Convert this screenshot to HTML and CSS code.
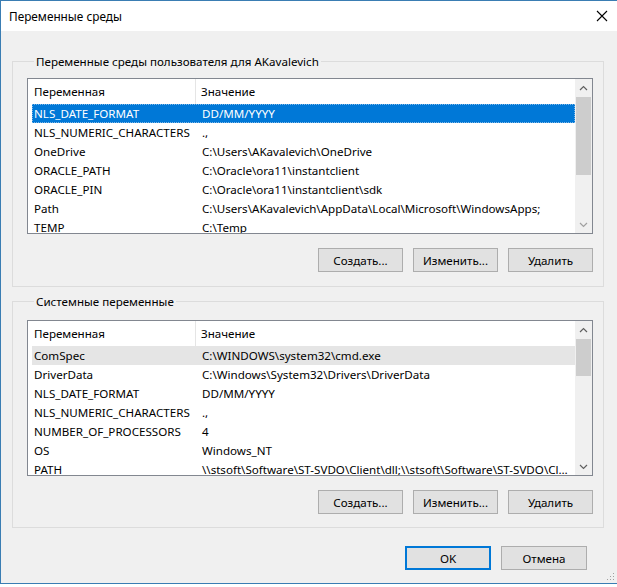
FILE: index.html
```html
<!DOCTYPE html>
<html lang="ru">
<head>
<meta charset="utf-8">
<title>Переменные среды</title>
<link rel="stylesheet" href="styles.css">
</head>
<body>
<div class="window">
  <div class="titlebar">
    <span class="title">Переменные среды</span>
    <svg class="close" width="12" height="12" viewBox="0 0 12 12"><path d="M1 1 L11 11 M11 1 L1 11" stroke="#000" stroke-width="1.1" fill="none"/></svg>
  </div>
  <div class="client">
    <fieldset class="group g1">
      <legend>Переменные среды пользователя для AKavalevich</legend>
      <div class="listview">
        <div class="list-main">
          <div class="lv-header"><div class="c1">Переменная</div><div class="c2">Значение</div></div>
          <div class="row selected"><div class="c1">NLS_DATE_FORMAT</div><div class="c2">DD/MM/YYYY</div></div>
          <div class="row"><div class="c1">NLS_NUMERIC_CHARACTERS</div><div class="c2">.,</div></div>
          <div class="row"><div class="c1">OneDrive</div><div class="c2">C:\Users\AKavalevich\OneDrive</div></div>
          <div class="row"><div class="c1">ORACLE_PATH</div><div class="c2">C:\Oracle\ora11\instantclient</div></div>
          <div class="row"><div class="c1">ORACLE_PIN</div><div class="c2">C:\Oracle\ora11\instantclient\sdk</div></div>
          <div class="row"><div class="c1">Path</div><div class="c2">C:\Users\AKavalevich\AppData\Local\Microsoft\WindowsApps;</div></div>
          <div class="row"><div class="c1">TEMP</div><div class="c2">C:\Temp</div></div>
        </div>
        <div class="vscroll">
          <div class="arrow"><svg width="9" height="6" viewBox="0 0 9 6"><path d="M1 5 L4.5 1.5 L8 5" stroke="#606060" stroke-width="1.2" fill="none"/></svg></div>
          <div class="track"><div class="thumb" style="height:78px"></div></div>
          <div class="arrow"><svg width="9" height="6" viewBox="0 0 9 6"><path d="M1 1 L4.5 4.5 L8 1" stroke="#a0a0a0" stroke-width="1.2" fill="none"/></svg></div>
        </div>
      </div>
      <div class="btnrow">
        <button class="btn">Создать...</button>
        <button class="btn">Изменить...</button>
        <button class="btn">Удалить</button>
      </div>
    </fieldset>

    <fieldset class="group g2">
      <legend>Системные переменные</legend>
      <div class="listview">
        <div class="list-main">
          <div class="lv-header"><div class="c1">Переменная</div><div class="c2">Значение</div></div>
          <div class="row hover"><div class="c1">ComSpec</div><div class="c2">C:\WINDOWS\system32\cmd.exe</div></div>
          <div class="row"><div class="c1">DriverData</div><div class="c2">C:\Windows\System32\Drivers\DriverData</div></div>
          <div class="row"><div class="c1">NLS_DATE_FORMAT</div><div class="c2">DD/MM/YYYY</div></div>
          <div class="row"><div class="c1">NLS_NUMERIC_CHARACTERS</div><div class="c2">.,</div></div>
          <div class="row"><div class="c1">NUMBER_OF_PROCESSORS</div><div class="c2">4</div></div>
          <div class="row"><div class="c1">OS</div><div class="c2">Windows_NT</div></div>
          <div class="row"><div class="c1">PATH</div><div class="c2 ellipsis">\\stsoft\Software\ST-SVDO\Client\dll;\\stsoft\Software\ST-SVDO\Client;C:\Oracle</div></div>
        </div>
        <div class="vscroll">
          <div class="arrow"><svg width="9" height="6" viewBox="0 0 9 6"><path d="M1 5 L4.5 1.5 L8 5" stroke="#606060" stroke-width="1.2" fill="none"/></svg></div>
          <div class="track"><div class="thumb" style="height:37px"></div></div>
          <div class="arrow"><svg width="9" height="6" viewBox="0 0 9 6"><path d="M1 1 L4.5 4.5 L8 1" stroke="#606060" stroke-width="1.2" fill="none"/></svg></div>
        </div>
      </div>
      <div class="btnrow">
        <button class="btn">Создать...</button>
        <button class="btn">Изменить...</button>
        <button class="btn">Удалить</button>
      </div>
    </fieldset>

    <div class="dlg-buttons">
      <button class="btn default">OK</button>
      <button class="btn">Отмена</button>
    </div>
    <svg class="grip" width="9" height="9" viewBox="0 0 9 9">
      <rect x="7" y="1" width="1" height="1" fill="#a0a0a0"/>
      <rect x="4" y="4" width="1" height="1" fill="#a0a0a0"/>
      <rect x="7" y="4" width="1" height="1" fill="#a0a0a0"/>
      <rect x="1" y="7" width="1" height="1" fill="#a0a0a0"/>
      <rect x="4" y="7" width="1" height="1" fill="#a0a0a0"/>
      <rect x="7" y="7" width="1" height="1" fill="#a0a0a0"/>
    </svg>
  </div>
</div>
</body>
</html>
```
FILE: styles.css
```css
* { box-sizing: border-box; }
html, body { margin: 0; padding: 0; }
body {
  width: 617px;
  height: 587px;
  background: #ffffff;
  font-family: "Noto Sans", "Open Sans", sans-serif;
  font-size: 11.6px;
  color: #000;
  overflow: hidden;
}
.window {
  width: 617px;
  height: 584px;
  border-top: 1px solid #3a7db3;
  border-left: 1px solid #3a7db3;
  border-bottom: 1px solid #3a7db3;
  display: flex;
  flex-direction: column;
}
.titlebar {
  height: 30px;
  background: #fff;
  display: flex;
  align-items: center;
  justify-content: space-between;
  padding: 0 9px 0 8px;
}
.title { font-size: 11.8px; line-height: 16px; }
.close { display: block; }
.client {
  flex: 1;
  background: #f0f0f0;
  padding: 0 13px 0 11px;
  display: flex;
  flex-direction: column;
  position: relative;
}
.group {
  margin: 0;
  border: 1px solid #dcdcdc;
  min-width: 0;
  width: 592px;
}
.group legend {
  padding: 0 2px;
  margin-left: 7px;
  line-height: 15px;
  font-size: 11.6px;
}
.g1 { margin-top: 23px; padding: 9px 10px 14px 14px; }
.g2 { margin-top: 7px; padding: 11px 10px 13px 14px; }

.listview {
  height: 156px;
  border: 1px solid #828790;
  background: #fff;
  display: flex;
}
.list-main {
  flex: 1;
  padding-left: 4px;
  overflow: hidden;
}
.lv-header {
  height: 25px;
  display: flex;
  align-items: center;
}
.lv-header .c1 {
  width: 164px;
  height: 100%;
  display: flex;
  align-items: center;
  padding-left: 2px;
  border-right: 1px solid #e5e5e5;
}
.lv-header .c2 { padding-left: 5px; }
.row {
  height: 19px;
  display: flex;
  align-items: center;
  white-space: nowrap;
}
.row .c1 { width: 164px; padding-left: 2px; flex: none; }
.row .c2 { padding-left: 6px; flex: 1; min-width: 0; overflow: hidden; }
.row .c2.ellipsis { text-overflow: ellipsis; padding-right: 6px; }
.row.selected {
  background: #0078d7;
  color: #fff;
  outline: 1px dotted #7fb7e6;
  outline-offset: -1px;
}
.row.hover { background: #e5e5e5; }

.vscroll {
  width: 17px;
  flex: none;
  background: #f0f0f0;
  display: flex;
  flex-direction: column;
}
.arrow {
  height: 17px;
  display: flex;
  align-items: center;
  justify-content: center;
}
.track { flex: 1; padding: 1px 1px 0 1px; }
.thumb { background: #cdcdcd; width: 15px; }

.btnrow {
  margin-top: 14px;
  display: flex;
  justify-content: flex-end;
  gap: 10px;
}
.btn {
  width: 85px;
  height: 24px;
  background: #e1e1e1;
  border: 1px solid #adadad;
  font-family: "Noto Sans", "Open Sans", sans-serif;
  font-size: 11.6px;
  color: #000;
  padding: 0;
}
.btn.default { border: 2px solid #0078d7; }
.dlg-buttons {
  margin-top: 18px;
  display: flex;
  justify-content: flex-end;
  gap: 10px;
  padding-right: 17px;
}
.dlg-buttons .btn { width: 86px; height: 24px; }
.grip {
  position: absolute;
  right: 2px;
  bottom: 2px;
}
```
